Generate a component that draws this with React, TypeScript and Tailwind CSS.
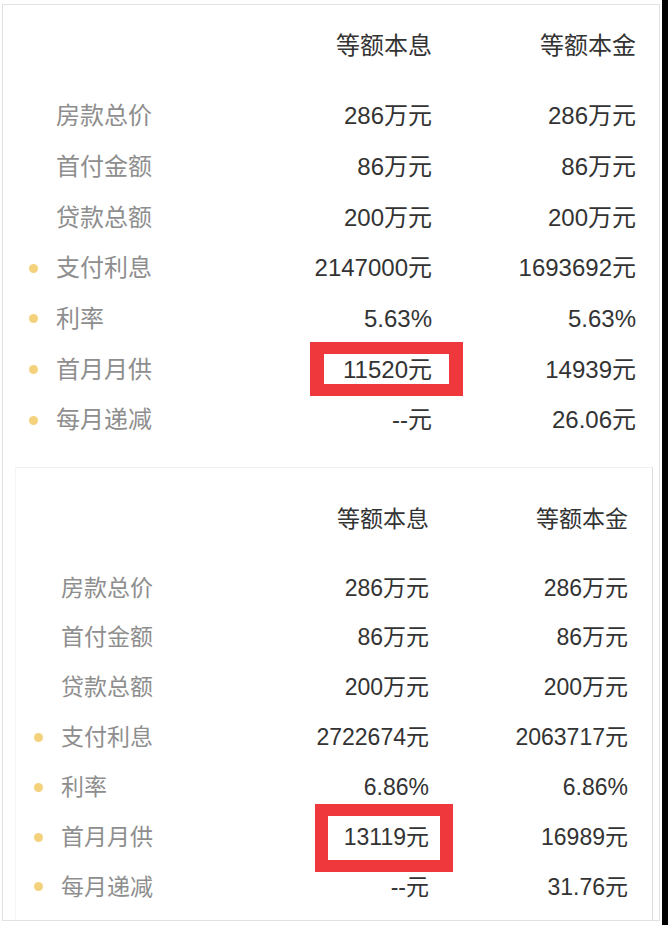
type Row = { label: string; dot?: boolean; a: string; b: string; mark?: boolean };

const firstRows: Row[] = [
  { label: "房款总价", a: "286万元", b: "286万元" },
  { label: "首付金额", a: "86万元", b: "86万元" },
  { label: "贷款总额", a: "200万元", b: "200万元" },
  { label: "支付利息", dot: true, a: "2147000元", b: "1693692元" },
  { label: "利率", dot: true, a: "5.63%", b: "5.63%" },
  { label: "首月月供", dot: true, a: "11520元", b: "14939元", mark: true },
  { label: "每月递减", dot: true, a: "--元", b: "26.06元" },
];

const secondRows: Row[] = [
  { label: "房款总价", a: "286万元", b: "286万元" },
  { label: "首付金额", a: "86万元", b: "86万元" },
  { label: "贷款总额", a: "200万元", b: "200万元" },
  { label: "支付利息", dot: true, a: "2722674元", b: "2063717元" },
  { label: "利率", dot: true, a: "6.86%", b: "6.86%" },
  { label: "首月月供", dot: true, a: "13119元", b: "16989元", mark: true },
  { label: "每月递减", dot: true, a: "--元", b: "31.76元" },
];

function Dot({ show }: { show?: boolean }) {
  return <span className={`h-[9px] w-[9px] shrink-0 rounded-full ${show ? "bg-[#f4d27c]" : "bg-transparent"}`} />;
}

function FirstTable() {
  return (
    <div className="pt-[16px] text-[24px]">
      <div className="grid h-[50px] grid-cols-[247px_182px_204px] items-center text-[#333]">
        <div />
        <div className="text-right">等额本息</div>
        <div className="text-right">等额本金</div>
      </div>
      <div className="mt-[20px]">
        {firstRows.map((r) => (
          <div key={r.label} className="grid h-[50.67px] grid-cols-[247px_182px_204px] items-center">
            <div className="flex items-center pl-[26px]">
              <Dot show={r.dot} />
              <span className="ml-[18px] text-[#8e8e8e]">{r.label}</span>
            </div>
            <div className="text-right text-[#333]">
              {r.mark ? (
                <span className="relative inline-block leading-[32px]">
                  {r.a}
                  <span className="absolute -top-[12px] -right-[31px] -bottom-[10px] -left-[33px] border-x-[14px] border-y-[12px] border-[#ee383b]" />
                </span>
              ) : (
                r.a
              )}
            </div>
            <div className="text-right text-[#333]">{r.b}</div>
          </div>
        ))}
      </div>
    </div>
  );
}

function SecondTable() {
  return (
    <div className="pt-[26px] text-[23px]">
      <div className="grid h-[50px] grid-cols-[234px_179px_199px] items-center text-[#333]">
        <div />
        <div className="text-right">等额本息</div>
        <div className="text-right">等额本金</div>
      </div>
      <div className="mt-[19px]">
        {secondRows.map((r) => (
          <div key={r.label} className="grid h-[49.83px] grid-cols-[234px_179px_199px] items-center">
            <div className="flex items-center pl-[18px]">
              <Dot show={r.dot} />
              <span className="ml-[18px] text-[#8e8e8e]">{r.label}</span>
            </div>
            <div className="text-right text-[#333]">
              {r.mark ? (
                <span className="relative inline-block leading-[32px]">
                  {r.a}
                  <span className="absolute -top-[17px] -right-[24px] -bottom-[19px] -left-[29px] border-x-[13px] border-y-[12px] border-[#ee383b]" />
                </span>
              ) : (
                r.a
              )}
            </div>
            <div className="text-right text-[#333]">{r.b}</div>
          </div>
        ))}
      </div>
    </div>
  );
}

export default function App() {
  return (
    <div className="flex h-[925px] w-[668px] bg-white font-['Liberation_Sans','Noto_Sans_CJK_SC',sans-serif]">
      <div className="w-[662px] pt-[4px] pl-[2px] pr-[2px] pb-[4px]">
        <div className="flex h-full flex-col border border-[#e2e2e2]">
          <div className="h-[462px]">
            <FirstTable />
          </div>
          <div className="ml-[12px] mr-[6px] flex-1 border-t border-r border-l border-t-[#f0f0f0] border-r-[#dadada] border-l-[#f6f6f6]">
            <SecondTable />
          </div>
        </div>
      </div>
      <div className="w-[6px] bg-black" />
    </div>
  );
}
